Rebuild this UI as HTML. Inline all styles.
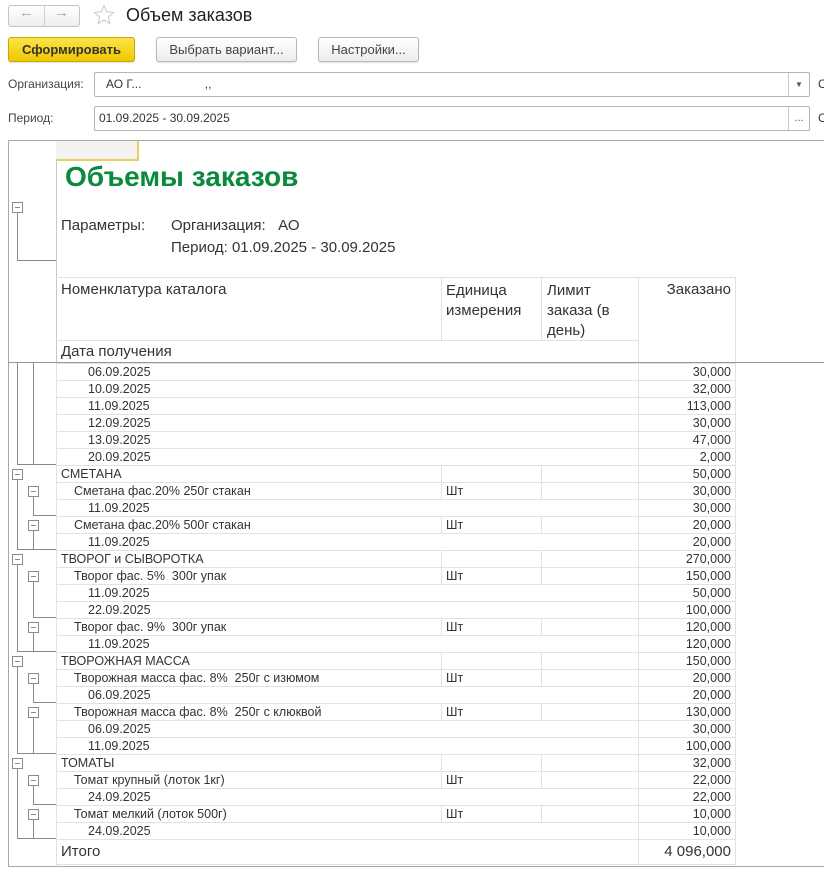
<!DOCTYPE html>
<html><head><meta charset="utf-8"><style>
*{box-sizing:border-box;margin:0;padding:0}
body{width:824px;height:873px;background:#fff;font-family:"Liberation Sans",sans-serif;color:#333;position:relative;overflow:hidden}
.abs{position:absolute}
.btn{position:absolute;top:37px;height:25px;border:1px solid #b8b8b8;border-radius:3px;background:linear-gradient(#fff,#ececec);font-size:13px;color:#444;text-align:center;line-height:23px;box-shadow:0 1px 1px rgba(0,0,0,.12)}
.inp{position:absolute;left:94px;width:716px;height:25px;border:1px solid #b5b5b5;border-radius:2px;font-size:12px;line-height:23px;color:#333}
.lbl{position:absolute;left:8px;font-size:12px;color:#444}
table{border-collapse:collapse;table-layout:fixed;position:absolute;left:56px;top:363px;font-size:12.5px;color:#333}
td{height:17px;border:1px solid #e2e2e2;padding:0 4px;white-space:nowrap;line-height:16px;overflow:hidden}
td.n{text-align:right}
.g{padding-left:4px}.i{padding-left:17px}.d{padding-left:31px}
</style></head><body>
<div class="abs" style="left:8px;top:5px;width:72px;height:22px;border:1px solid #c4c4c4;border-radius:3px;background:linear-gradient(#fff,#eee)"></div>
<div class="abs" style="left:44px;top:6px;width:1px;height:20px;background:#d0d0d0"></div>
<div class="abs" style="left:19px;top:4px;font-size:15px;color:#aaa">&#8592;</div>
<div class="abs" style="left:54px;top:4px;font-size:15px;color:#aaa">&#8594;</div>
<svg class="abs" style="left:93px;top:4px" width="22" height="22" viewBox="0 0 22 22"><path d="M11 1.5l2.8 6.3 6.7.6-5.1 4.5 1.5 6.7L11 16.1l-5.9 3.5 1.5-6.7-5.1-4.5 6.7-.6z" fill="none" stroke="#c8c8c8" stroke-width="1"/></svg>
<div class="abs" style="left:126px;top:5px;font-size:18px;color:#222">Объем заказов</div>
<div class="btn" style="left:8px;width:127px;background:linear-gradient(#fbe44a,#f0c800);border-color:#c9a800;font-weight:bold;color:#333">Сформировать</div>
<div class="btn" style="left:156px;width:141px">Выбрать вариант...</div>
<div class="btn" style="left:318px;width:101px">Настройки...</div>
<div class="lbl" style="top:77px">Организация:</div>
<div class="inp" style="top:72px;padding-left:11px">АО Г...&nbsp;&nbsp;&nbsp;&nbsp;&nbsp;&nbsp;&nbsp;&nbsp;&nbsp;&nbsp;&nbsp;&nbsp;&nbsp;&nbsp;&nbsp;&nbsp;&nbsp;&nbsp;&nbsp;,,<div class="abs" style="right:0;top:0;width:21px;height:23px;border-left:1px solid #c8c8c8;text-align:center;font-size:8px;color:#555">&#9660;</div></div>
<div class="lbl" style="top:111px">Период:</div>
<div class="inp" style="top:106px;padding-left:4px">01.09.2025 - 30.09.2025<div class="abs" style="right:0;top:0;width:21px;height:23px;border-left:1px solid #c8c8c8;text-align:center;font-size:11px;color:#555">...</div></div>
<div class="abs" style="left:818px;top:77px;font-size:12px">С</div>
<div class="abs" style="left:818px;top:111px;font-size:12px">С</div>
<div class="abs" style="left:8px;top:140px;width:830px;height:727px;border:1px solid #a8a8a8"></div>
<div class="abs" style="left:56px;top:141px;width:1px;height:726px;background:#c8c8c8"></div>
<div class="abs" style="left:56px;top:141px;width:83px;height:20px;background:#f2f2f2;border-right:2px solid #e8d060;border-bottom:2px solid #e8d060"></div>
<div class="abs" style="left:65px;top:161px;font-size:28px;font-weight:bold;color:#0a8a3e">Объемы заказов</div>
<div class="abs" style="left:61px;top:217px;font-size:15px">Параметры:</div>
<div class="abs" style="left:171px;top:217px;font-size:15px">Организация:&nbsp;&nbsp;&nbsp;АО</div>
<div class="abs" style="left:171px;top:239px;font-size:15px">Период: 01.09.2025 - 30.09.2025</div>
<div class="abs" style="left:56px;top:277px;width:680px;height:87px;border-top:1px solid #e2e2e2;border-right:1px solid #e2e2e2"></div>
<div class="abs" style="left:441px;top:277px;width:1px;height:64px;background:#e2e2e2"></div>
<div class="abs" style="left:541px;top:277px;width:1px;height:64px;background:#e2e2e2"></div>
<div class="abs" style="left:638px;top:277px;width:1px;height:86px;background:#e2e2e2"></div>
<div class="abs" style="left:56px;top:340px;width:582px;height:1px;background:#e2e2e2"></div>
<div class="abs" style="left:61px;top:281px;font-size:15px">Номенклатура каталога</div>
<div class="abs" style="left:446px;top:281px;font-size:15px;line-height:20px">Единица<br>измерения</div>
<div class="abs" style="left:547px;top:281px;font-size:15px;line-height:20px">Лимит<br>заказа (в<br>день)</div>
<div class="abs" style="left:638px;top:281px;width:93px;text-align:right;font-size:15px">Заказано</div>
<div class="abs" style="left:61px;top:343px;font-size:15px">Дата получения</div>
<div class="abs" style="left:8px;top:362px;width:816px;height:1px;background:#999"></div>
<svg class="abs" style="left:0;top:0" width="60" height="873">
<g stroke="#8a8a8a" stroke-width="1" fill="none" shape-rendering="crispEdges">
<rect x="12.5" y="202.5" width="10" height="10" fill="#fff"/><path d="M15 207.5h5M17.5 212.5V260.5H56"/>
<path d="M17.5 363V464.5H56M33.5 363V464.5"/>
<rect x="12.5" y="469.5" width="10" height="10" fill="#fff"/><path d="M15 474.5h5M17.5 479.5V549.5H56"/>
<rect x="28.5" y="486.5" width="10" height="10" fill="#fff"/><path d="M31 491.5h5M33.5 496.5V515.5H56"/>
<rect x="28.5" y="520.5" width="10" height="10" fill="#fff"/><path d="M31 525.5h5M33.5 530.5V549.5H56"/>
<rect x="12.5" y="554.5" width="10" height="10" fill="#fff"/><path d="M15 559.5h5M17.5 564.5V651.5H56"/>
<rect x="28.5" y="571.5" width="10" height="10" fill="#fff"/><path d="M31 576.5h5M33.5 581.5V617.5H56"/>
<rect x="28.5" y="622.5" width="10" height="10" fill="#fff"/><path d="M31 627.5h5M33.5 632.5V651.5H56"/>
<rect x="12.5" y="656.5" width="10" height="10" fill="#fff"/><path d="M15 661.5h5M17.5 666.5V753.5H56"/>
<rect x="28.5" y="673.5" width="10" height="10" fill="#fff"/><path d="M31 678.5h5M33.5 683.5V702.5H56"/>
<rect x="28.5" y="707.5" width="10" height="10" fill="#fff"/><path d="M31 712.5h5M33.5 717.5V753.5H56"/>
<rect x="12.5" y="758.5" width="10" height="10" fill="#fff"/><path d="M15 763.5h5M17.5 768.5V838.5H56"/>
<rect x="28.5" y="775.5" width="10" height="10" fill="#fff"/><path d="M31 780.5h5M33.5 785.5V804.5H56"/>
<rect x="28.5" y="809.5" width="10" height="10" fill="#fff"/><path d="M31 814.5h5M33.5 819.5V838.5H56"/>
</g></svg>
<table>
<colgroup><col style="width:385px"><col style="width:100px"><col style="width:97px"><col style="width:97px"></colgroup>
<tr><td colspan="3" class="d">06.09.2025</td><td class="n">30,000</td></tr>
<tr><td colspan="3" class="d">10.09.2025</td><td class="n">32,000</td></tr>
<tr><td colspan="3" class="d">11.09.2025</td><td class="n">113,000</td></tr>
<tr><td colspan="3" class="d">12.09.2025</td><td class="n">30,000</td></tr>
<tr><td colspan="3" class="d">13.09.2025</td><td class="n">47,000</td></tr>
<tr><td colspan="3" class="d">20.09.2025</td><td class="n">2,000</td></tr>
<tr><td class="g">СМЕТАНА</td><td></td><td></td><td class="n">50,000</td></tr>
<tr><td class="i">Сметана фас.20% 250г стакан</td><td>Шт</td><td></td><td class="n">30,000</td></tr>
<tr><td colspan="3" class="d">11.09.2025</td><td class="n">30,000</td></tr>
<tr><td class="i">Сметана фас.20% 500г стакан</td><td>Шт</td><td></td><td class="n">20,000</td></tr>
<tr><td colspan="3" class="d">11.09.2025</td><td class="n">20,000</td></tr>
<tr><td class="g">ТВОРОГ и СЫВОРОТКА</td><td></td><td></td><td class="n">270,000</td></tr>
<tr><td class="i">Творог фас. 5%&nbsp; 300г упак</td><td>Шт</td><td></td><td class="n">150,000</td></tr>
<tr><td colspan="3" class="d">11.09.2025</td><td class="n">50,000</td></tr>
<tr><td colspan="3" class="d">22.09.2025</td><td class="n">100,000</td></tr>
<tr><td class="i">Творог фас. 9%&nbsp; 300г упак</td><td>Шт</td><td></td><td class="n">120,000</td></tr>
<tr><td colspan="3" class="d">11.09.2025</td><td class="n">120,000</td></tr>
<tr><td class="g">ТВОРОЖНАЯ МАССА</td><td></td><td></td><td class="n">150,000</td></tr>
<tr><td class="i">Творожная масса фас. 8%&nbsp; 250г с изюмом</td><td>Шт</td><td></td><td class="n">20,000</td></tr>
<tr><td colspan="3" class="d">06.09.2025</td><td class="n">20,000</td></tr>
<tr><td class="i">Творожная масса фас. 8%&nbsp; 250г с клюквой</td><td>Шт</td><td></td><td class="n">130,000</td></tr>
<tr><td colspan="3" class="d">06.09.2025</td><td class="n">30,000</td></tr>
<tr><td colspan="3" class="d">11.09.2025</td><td class="n">100,000</td></tr>
<tr><td class="g">ТОМАТЫ</td><td></td><td></td><td class="n">32,000</td></tr>
<tr><td class="i">Томат крупный (лоток 1кг)</td><td>Шт</td><td></td><td class="n">22,000</td></tr>
<tr><td colspan="3" class="d">24.09.2025</td><td class="n">22,000</td></tr>
<tr><td class="i">Томат мелкий (лоток 500г)</td><td>Шт</td><td></td><td class="n">10,000</td></tr>
<tr><td colspan="3" class="d">24.09.2025</td><td class="n">10,000</td></tr>
<tr><td colspan="3" style="height:25px;font-size:15px;line-height:22px">Итого</td><td class="n" style="height:25px;font-size:15px">4 096,000</td></tr>
</table>
</body></html>
